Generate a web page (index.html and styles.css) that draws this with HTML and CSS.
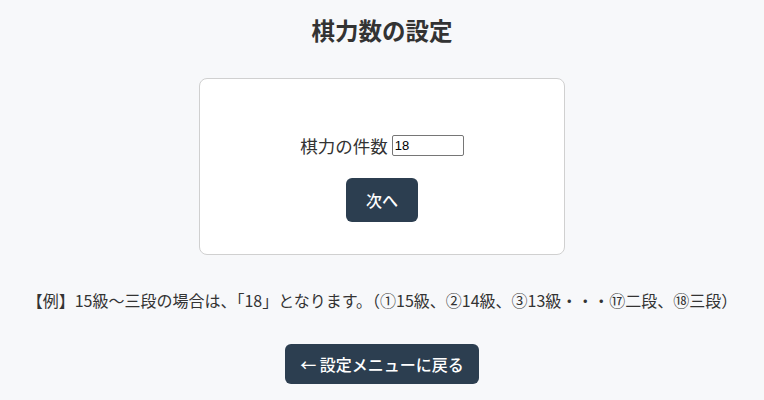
FILE: index.html
```html
<!DOCTYPE html>
<html lang="ja">
<head>
<meta charset="utf-8">
<link rel="stylesheet" href="styles.css">
</head>
<body>
<main class="page">
  <h1 class="title">棋力数の設定</h1>
  <section class="card">
    <div class="field">
      <label class="label" for="count">棋力の件数</label>
      <input class="input" id="count" type="text" value="18">
    </div>
    <button class="btn btn-next">次へ</button>
  </section>
  <p class="example">【例】15級～三段の場合は、「18」となります。（①15級、②14級、③13級・・・⑰二段、⑱三段）</p>
  <button class="btn btn-back">← 設定メニューに戻る</button>
</main>
</body>
</html>
```
FILE: styles.css
```css
html, body {
  margin: 0;
  padding: 0;
  background: #f7f8fa;
}
body {
  font-family: "Noto Sans CJK JP", "Noto Sans", sans-serif;
  color: #333;
}
.page {
  display: flex;
  flex-direction: column;
  align-items: center;
  padding-top: 12px;
}
.title {
  margin: 0;
  font-size: 23.5px;
  line-height: 36px;
  font-weight: 700;
  color: #333;
}
.card {
  margin-top: 30px;
  width: 366px;
  height: 177px;
  box-sizing: border-box;
  background: #fff;
  border: 1px solid #d0d0d0;
  border-radius: 8px;
  display: flex;
  flex-direction: column;
  align-items: center;
  padding-top: 54px;
}
.field {
  display: flex;
  align-items: center;
  gap: 4px;
  height: 24px;
}
.label {
  font-size: 17.5px;
  color: #333;
}
.input {
  width: 72px;
  height: 21px;
  box-sizing: border-box;
  border: 1px solid #767676;
  border-radius: 2px;
  padding: 1px 2px;
  font-family: "Liberation Sans", Arial, sans-serif;
  font-size: 13px;
  color: #000;
}
.btn {
  background: #2c3e50;
  color: #fff;
  border: none;
  border-radius: 6px;
  font-family: "Noto Sans CJK JP", "Noto Sans", sans-serif;
  font-size: 16px;
  font-weight: 500;
}
.btn-next {
  margin-top: 21px;
  width: 72px;
  height: 44px;
}
.example {
  margin: 33px 0 0;
  font-size: 16px;
  line-height: 24px;
  color: #333;
}
.btn-back {
  margin-top: 32px;
  width: 194px;
  height: 40px;
}
```
